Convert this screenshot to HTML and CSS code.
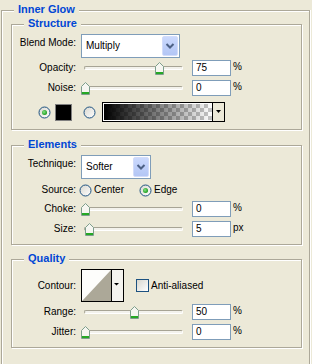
FILE: index.html
```html
<!DOCTYPE html>
<html>
<head>
<meta charset="utf-8">
<link rel="stylesheet" href="styles.css">
</head>
<body>
<svg class="defs" width="0" height="0" aria-hidden="true">
  <defs>
    <linearGradient id="rfill" x1="0" y1="0" x2="1" y2="1">
      <stop offset="0" stop-color="#d8d7cf"/>
      <stop offset="1" stop-color="#ffffff"/>
    </linearGradient>
    <radialGradient id="dot" cx="0.4" cy="0.4" r="0.6">
      <stop offset="0" stop-color="#86e486"/>
      <stop offset="1" stop-color="#1c9c1c"/>
    </radialGradient>
    <symbol id="radio" viewBox="0 0 13 13">
      <circle cx="6.5" cy="6.5" r="5.5" fill="url(#rfill)" stroke="#1c5180"/>
    </symbol>
    <symbol id="radio-on" viewBox="0 0 13 13">
      <circle cx="6.5" cy="6.5" r="5.5" fill="url(#rfill)" stroke="#1c5180"/>
      <circle cx="6.5" cy="6.5" r="2.5" fill="url(#dot)"/>
    </symbol>
    <symbol id="thumb" viewBox="0 0 9 13">
      <path d="M0.5 4.5 L4.5 0.5 L8.5 4.5 V12.5 H0.5 Z" fill="#f6f6f1" stroke="#7d9e8c"/>
      <rect x="1" y="10" width="7" height="2" fill="#25a825"/>
    </symbol>
    <symbol id="chev" viewBox="0 0 16 22">
      <path d="M4.5 9 L8 12.5 L11.5 9" fill="none" stroke="#4d6185" stroke-width="2"/>
    </symbol>
    <symbol id="down" viewBox="0 0 6 4">
      <polygon points="0,0 5,0 2.5,3" fill="#000"/>
    </symbol>
  </defs>
</svg>

<div class="outer">
  <div class="title">Inner Glow</div>

  <div class="group g1">
    <div class="title">Structure</div>

    <div class="row r-sel">
      <span class="label top">Blend Mode:</span>
      <div class="select s-blend"><span class="val">Multiply</span><span class="btn"><svg width="16" height="22"><use href="#chev"/></svg></span></div>
    </div>

    <div class="row r-sl mt2">
      <span class="label">Opacity:</span>
      <div class="slider"><div class="track"></div><svg class="thumb" width="9" height="13" style="left:74px"><use href="#thumb"/></svg></div>
      <div class="input">75</div><span class="unit">%</span>
    </div>

    <div class="row r-sl">
      <span class="label">Noise:</span>
      <div class="slider"><div class="track"></div><svg class="thumb" width="9" height="13" style="left:0px"><use href="#thumb"/></svg></div>
      <div class="input">0</div><span class="unit">%</span>
    </div>

    <div class="row r-color">
      <svg class="radio" width="13" height="13"><use href="#radio-on"/></svg>
      <div class="swatch"></div>
      <svg class="radio r2" width="13" height="13"><use href="#radio"/></svg>
      <div class="gradbox"><div class="grad"></div><div class="gbtn"><svg width="6" height="4"><use href="#down"/></svg></div></div>
    </div>
  </div>

  <div class="group g2">
    <div class="title">Elements</div>

    <div class="row r-sel">
      <span class="label top">Technique:</span>
      <div class="select s-tech"><span class="val">Softer</span><span class="btn"><svg width="16" height="22"><use href="#chev"/></svg></span></div>
    </div>

    <div class="row r-src">
      <span class="label tight">Source:</span>
      <div class="opt o1"><svg class="radio" width="13" height="13"><use href="#radio"/></svg><span>Center</span></div>
      <div class="opt"><svg class="radio" width="13" height="13"><use href="#radio-on"/></svg><span>Edge</span></div>
    </div>

    <div class="row r-sl">
      <span class="label">Choke:</span>
      <div class="slider"><div class="track"></div><svg class="thumb" width="9" height="13" style="left:0px"><use href="#thumb"/></svg></div>
      <div class="input">0</div><span class="unit">%</span>
    </div>

    <div class="row r-sl">
      <span class="label">Size:</span>
      <div class="slider"><div class="track"></div><svg class="thumb" width="9" height="13" style="left:4px"><use href="#thumb"/></svg></div>
      <div class="input">5</div><span class="unit">px</span>
    </div>
  </div>

  <div class="group g3">
    <div class="title">Quality</div>

    <div class="row r-contour">
      <span class="label">Contour:</span>
      <svg class="contour" width="43" height="33" viewBox="0 0 43 33">
        <rect x="0.5" y="0.5" width="42" height="32" fill="#fdfdfb" stroke="#000"/>
        <polygon points="1,32 30,1 30,32" fill="#aca898"/>
        <rect x="31" y="1" width="11" height="31" fill="#f4f3ee"/>
        <line x1="30.5" y1="0" x2="30.5" y2="33" stroke="#000"/>
        <polygon points="33,14 38,14 35.5,16.5" fill="#000"/>
      </svg>
      <div class="check"></div>
      <span class="chk-label">Anti-aliased</span>
    </div>

    <div class="row r-sl mt2">
      <span class="label">Range:</span>
      <div class="slider"><div class="track"></div><svg class="thumb" width="9" height="13" style="left:49px"><use href="#thumb"/></svg></div>
      <div class="input">50</div><span class="unit">%</span>
    </div>

    <div class="row r-sl">
      <span class="label">Jitter:</span>
      <div class="slider"><div class="track"></div><svg class="thumb" width="9" height="13" style="left:0px"><use href="#thumb"/></svg></div>
      <div class="input">0</div><span class="unit">%</span>
    </div>
  </div>
</div>
</body>
</html>
```

FILE: styles.css
```css
html, body {
  margin: 0;
  padding: 0;
}
body {
  background: #ece9d8;
  font-family: "Liberation Sans", Arial, sans-serif;
  font-size: 10px;
  line-height: 12px;
  color: #000;
  width: 312px;
  height: 364px;
  overflow: hidden;
}
.defs {
  display: block;
  width: 0;
  height: 0;
}
.outer {
  box-sizing: border-box;
  width: 309px;
  height: 354px;
  margin: 10px 0 0 1px;
  border: 1px solid #aca899;
  border-bottom: none;
  box-shadow: inset 1px 1px 0 #fff, 1px 0 0 #fff;
  display: flex;
  flex-direction: column;
}
.title {
  align-self: flex-start;
  margin: -8px 0 0 12px;
  padding: 0 4px;
  background: #ece9d8;
  color: #0046d5;
  font-weight: bold;
  font-size: 11px;
  line-height: 13px;
}
.group {
  box-sizing: border-box;
  width: 291px;
  margin-left: 9px;
  border: 1px solid #aca899;
  box-shadow: inset 1px 1px 0 #fff, 1px 1px 0 #fff;
  padding: 0 0 7px 0;
  display: flex;
  flex-direction: column;
  flex: none;
}
.g1 { margin-top: 8px; }
.g2 { margin-top: 15px; }
.g3 { margin-top: 14px; }

.row {
  display: flex;
  align-items: center;
  margin-top: 4px;
  flex: none;
}
.mt2 { margin-top: 2px; }
.label {
  flex: none;
  width: 64px;
  margin-right: 5px;
  text-align: right;
  white-space: nowrap;
}
.label.top {
  align-self: flex-start;
  padding-top: 3px;
}
.label.tight { margin-right: 3px; }

.r-sel { height: 24px; }
.r-sl { height: 16px; }
.r-src { height: 14px; }
.r-contour { height: 33px; }
.r-color { height: 20px; margin-top: 6px; padding-left: 26px; }

/* select */
.select {
  box-sizing: border-box;
  height: 24px;
  border: 1px solid #7f9db9;
  background: #fff;
  padding: 1px;
  display: flex;
  align-items: center;
}
.s-blend { width: 99px; }
.s-tech { width: 70px; }
.select .val {
  flex: 1;
  padding-left: 3px;
}
.select .btn {
  box-sizing: border-box;
  width: 16px;
  height: 20px;
  border: 1px solid #d2dcfa;
  border-radius: 2px;
  background: linear-gradient(#cbd9fd, #b3c6f5);
  display: flex;
  align-items: center;
  justify-content: center;
  overflow: hidden;
}
.select .btn svg { display: block; flex: none; }

/* slider */
.slider {
  position: relative;
  flex: none;
  width: 106px;
  height: 16px;
  margin-right: 5px;
}
.track {
  position: absolute;
  left: 3px;
  top: 6px;
  box-sizing: border-box;
  width: 99px;
  height: 4px;
  border: 1px solid;
  border-color: #a7a495 #fff #fff #a7a495;
  border-radius: 2px;
  background: #f3f2ec;
}
.thumb {
  position: absolute;
  top: 2px;
  display: block;
}
.input {
  box-sizing: border-box;
  flex: none;
  width: 39px;
  height: 16px;
  border: 1px solid #7f9db9;
  background: #fff;
  padding-left: 3px;
  line-height: 14px;
}
.unit {
  margin-left: 2px;
  align-self: flex-start;
  margin-top: 1px;
}

/* color row */
.radio { display: block; flex: none; }
.swatch {
  box-sizing: border-box;
  width: 17px;
  height: 17px;
  margin-left: 4px;
  border: 1px solid #808080;
  background: #000;
}
.r2 { margin-left: 11px; }
.gradbox {
  box-sizing: border-box;
  width: 123px;
  height: 20px;
  margin-left: 6px;
  border: 1px solid #000;
  background: #fff;
  display: flex;
}
.grad {
  flex: 1;
  margin: 1px 0 1px 1px;
  background:
    linear-gradient(to right, #000, rgba(0, 0, 0, 0)),
    repeating-conic-gradient(#c6c6c6 0 25%, #ffffff 0 50%) 0 0 / 8px 8px;
}
.gbtn {
  width: 11px;
  border-left: 1px solid #000;
  background: #ece9d8;
  display: flex;
  align-items: center;
  justify-content: center;
}
.gbtn svg { display: block; }

/* source */
.opt {
  display: flex;
  align-items: center;
  gap: 2px;
}
.o1 { width: 60px; }

/* contour */
.contour { display: block; flex: none; }
.check {
  box-sizing: border-box;
  width: 13px;
  height: 13px;
  margin-left: 12px;
  border: 1px solid #1c5180;
  background: linear-gradient(135deg, #d8d7cf, #ffffff);
}
.chk-label { margin-left: 2px; }
```
